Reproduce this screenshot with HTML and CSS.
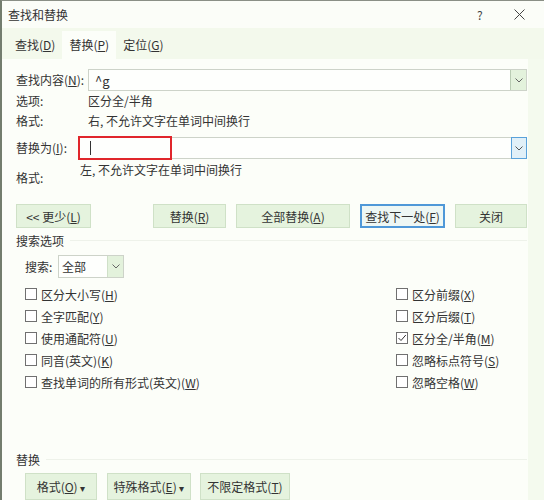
FILE: index.html
```html
<!DOCTYPE html>
<html lang="zh-CN">
<head>
<meta charset="utf-8">
<title>查找和替换</title>
<link rel="stylesheet" href="styles.css">
</head>
<body>
<div class="window">
  <div class="titlebar">
    <span class="title">查找和替换</span>
    <span class="help">?</span>
    <svg class="close" width="11" height="11" viewBox="0 0 11 11"><path d="M0.5 0.5 L10.5 10.5 M10.5 0.5 L0.5 10.5" stroke="#444" stroke-width="1" fill="none"/></svg>
  </div>
  <div class="tabs">
    <span class="tab">查找(<u>D</u>)</span>
    <span class="tab active">替换(<u>P</u>)</span>
    <span class="tab">定位(<u>G</u>)</span>
  </div>
  <div class="panel">
    <div class="find-grid">
      <span class="lbl">查找内容(<u>N</u>):</span>
      <div class="combo">
        <span class="combo-text">^g</span>
        <span class="drop"><svg width="8" height="5" viewBox="0 0 8 5"><path d="M0.5 0.5 L4 4 L7.5 0.5" stroke="#666" fill="none"/></svg></span>
      </div>
      <span class="lbl">选项:</span><span class="val">区分全/半角</span>
      <span class="lbl">格式:</span><span class="val">右, 不允许文字在单词中间换行</span>
    </div>
    <div class="replace-row">
      <span class="lbl rlbl">替换为(<u>I</u>):</span>
      <div class="combo focus">
        <span class="caret"></span>
        <span class="drop blue"><svg width="8" height="5" viewBox="0 0 8 5"><path d="M0.5 0.5 L4 4 L7.5 0.5" stroke="#555" fill="none"/></svg></span>
        <span class="annot"></span>
      </div>
    </div>
    <div class="fmt-row">
      <span class="lbl fl">格式:</span>
      <span class="val fv">左, 不允许文字在单词中间换行</span>
    </div>
    <div class="btn-row">
      <button class="btn w75">&lt;&lt; 更少(<u>L</u>)</button>
      <span class="spacer"></span>
      <button class="btn w73">替换(<u>R</u>)</button>
      <button class="btn w114">全部替换(<u>A</u>)</button>
      <button class="btn w85 default">查找下一处(<u>F</u>)</button>
      <button class="btn w72">关闭</button>
    </div>
    <div class="group-head"><span>搜索选项</span><span class="rule"></span></div>
    <div class="search-row">
      <span>搜索:</span>
      <div class="select">
        <span class="sel-text">全部</span>
        <span class="sdrop"><svg width="8" height="5" viewBox="0 0 8 5"><path d="M0.5 0.5 L4 4 L7.5 0.5" stroke="#666" fill="none"/></svg></span>
      </div>
    </div>
    <div class="checks">
      <label class="chk"><span class="box"></span>区分大小写(<u>H</u>)</label>
      <label class="chk"><span class="box"></span>区分前缀(<u>X</u>)</label>
      <label class="chk"><span class="box"></span>全字匹配(<u>Y</u>)</label>
      <label class="chk"><span class="box"></span>区分后缀(<u>T</u>)</label>
      <label class="chk"><span class="box"></span>使用通配符(<u>U</u>)</label>
      <label class="chk"><span class="box"><svg width="10" height="10" viewBox="0 0 10 10"><path d="M1.5 5 L4 7.5 L8.8 2" stroke="#333" stroke-width="1" fill="none"/></svg></span>区分全/半角(<u>M</u>)</label>
      <label class="chk"><span class="box"></span>同音(英文)(<u>K</u>)</label>
      <label class="chk"><span class="box"></span>忽略标点符号(<u>S</u>)</label>
      <label class="chk"><span class="box"></span>查找单词的所有形式(英文)(<u>W</u>)</label>
      <label class="chk"><span class="box"></span>忽略空格(<u>W</u>)</label>
    </div>
    <div class="group-head bottom-head"><span>替换</span><span class="rule"></span></div>
    <div class="bottom-btns">
      <button class="btn w72">格式(<u>O</u>) <span class="tri">▾</span></button>
      <button class="btn w84">特殊格式(<u>E</u>) <span class="tri">▾</span></button>
      <button class="btn w90">不限定格式(<u>T</u>)</button>
    </div>
  </div>
</div>
</body>
</html>
```

FILE: styles.css
```css
* { box-sizing: border-box; }
html, body {
  margin: 0;
  padding: 0;
  width: 544px;
  height: 500px;
  overflow: hidden;
  background: #f4faee;
}
body {
  font-family: "Noto Sans CJK SC", "Noto Sans", sans-serif;
  font-size: 12px;
  color: #333;
}
u { text-decoration: underline; text-underline-offset: 1px; }
.window {
  height: 500px;
  border-top: 1px solid #8a8f86;
  border-left: 2px solid #737d6e;
  background: #f4faee;
  display: flex;
  flex-direction: column;
}
.titlebar {
  height: 27px;
  display: flex;
  align-items: center;
  padding-left: 6px;
  background: #fbfdf8;
}
.title { flex: 1; color: #333; font-size: 12px; }
.help { width: 14px; margin-right: 23px; color: #444; font-size: 12px; }
.close { margin-right: 19px; }
.tabs {
  height: 32px;
  display: flex;
  align-items: flex-end;
  padding-left: 6px;
  background: #f3f9ec;
}
.tab {
  height: 28px;
  line-height: 28px;
  padding: 0 7px;
  color: #333;
  white-space: nowrap;
}
.tab.active {
  background: #fcfef9;
}
.panel {
  flex: 1;
  margin-right: 16px;
  background: #fcfef9;
  padding: 10px 1px 0 14px;
}
.find-grid {
  display: grid;
  grid-template-columns: 72px 1fr;
  grid-template-rows: 22px 20px 19px;
  align-items: center;
}
.lbl { color: #333; white-space: nowrap; line-height: 18px; }
.val { color: #333; white-space: nowrap; line-height: 18px; }
.combo {
  position: relative;
  height: 22px;
  border: 1px solid #cdd3c9;
  background: #fefffd;
  display: flex;
  align-items: center;
}
.combo-text { flex: 1; padding-left: 6px; font-size: 13px; }
.drop {
  width: 16px;
  height: 20px;
  background: #e3f2dc;
  border-left: 1px solid #b9ccb3;
  display: flex;
  align-items: center;
  justify-content: center;
}
.drop.blue {
  background: #e1f0f8;
  border: 1px solid #5aa2da;
  height: 22px;
  margin: -1px -1px -1px 0;
}
.replace-row {
  display: flex;
  align-items: center;
  margin-top: 7px;
}
.rlbl { width: 62px; }
.replace-row .combo { flex: 1; }
.caret {
  width: 1px;
  height: 14px;
  margin-left: 11px;
  margin-right: auto;
  background: #333;
}
.annot {
  position: absolute;
  left: -1px;
  top: -2px;
  width: 94px;
  height: 24px;
  border: 2px solid #e0262b;
  pointer-events: none;
}
.fmt-row {
  display: grid;
  grid-template-columns: 64px 1fr;
  height: 28px;
}
.fl { align-self: end; }
.fv { align-self: start; margin-top: 2px; }
.btn-row {
  display: flex;
  gap: 10px;
  margin-top: 17px;
  height: 24px;
}
.spacer { flex: 1; margin-left: -10px; }
.btn {
  font-family: inherit;
  font-size: 12px;
  color: #333;
  height: 24px;
  padding: 0;
  background: #e5f3de;
  border: 1px solid #cfe1c7;
  border-radius: 0;
}
.btn.default {
  border: 2px solid #4f98d8;
  background: #eef7f4;
}
.w75 { width: 75px; }
.w73 { width: 73px; }
.w114 { width: 114px; }
.w85 { width: 85px; }
.w72 { width: 72px; }
.w84 { width: 84px; }
.w90 { width: 90px; }
.group-head {
  display: flex;
  align-items: center;
  margin-top: 3px;
  height: 18px;
}
.group-head .rule {
  flex: 1;
  height: 1px;
  margin-left: 6px;
  background: #eef2ea;
}
.search-row {
  display: flex;
  align-items: center;
  margin-top: 6px;
  padding-left: 9px;
  height: 23px;
}
.search-row > span:first-child { width: 33px; }
.select {
  width: 66px;
  height: 23px;
  border: 1px solid #cdd3c9;
  background: #fefffd;
  display: flex;
  align-items: center;
}
.sel-text { flex: 1; padding-left: 3px; }
.sdrop {
  width: 16px;
  height: 21px;
  background: #e3f2dc;
  border-left: 1px solid #cfe0c8;
  display: flex;
  align-items: center;
  justify-content: center;
}
.checks {
  display: grid;
  grid-template-columns: 371px 1fr;
  grid-auto-rows: 22px;
  padding-left: 9px;
  margin-top: 5px;
}
.chk {
  display: flex;
  align-items: center;
  white-space: nowrap;
}
.box {
  width: 12px;
  height: 12px;
  border: 1px solid #707070;
  background: #fff;
  margin-right: 4px;
  display: flex;
  align-items: center;
  justify-content: center;
}
.box svg { display: block; }
.bottom-head { margin-top: 57px; }
.bottom-btns {
  display: flex;
  gap: 10px;
  padding-left: 9px;
  margin-top: 5px;
}
.bottom-btns .btn { height: 27px; }
.bottom-btns .btn:nth-child(3) { margin-left: -1px; }
.tri { font-size: 10px; }
```
